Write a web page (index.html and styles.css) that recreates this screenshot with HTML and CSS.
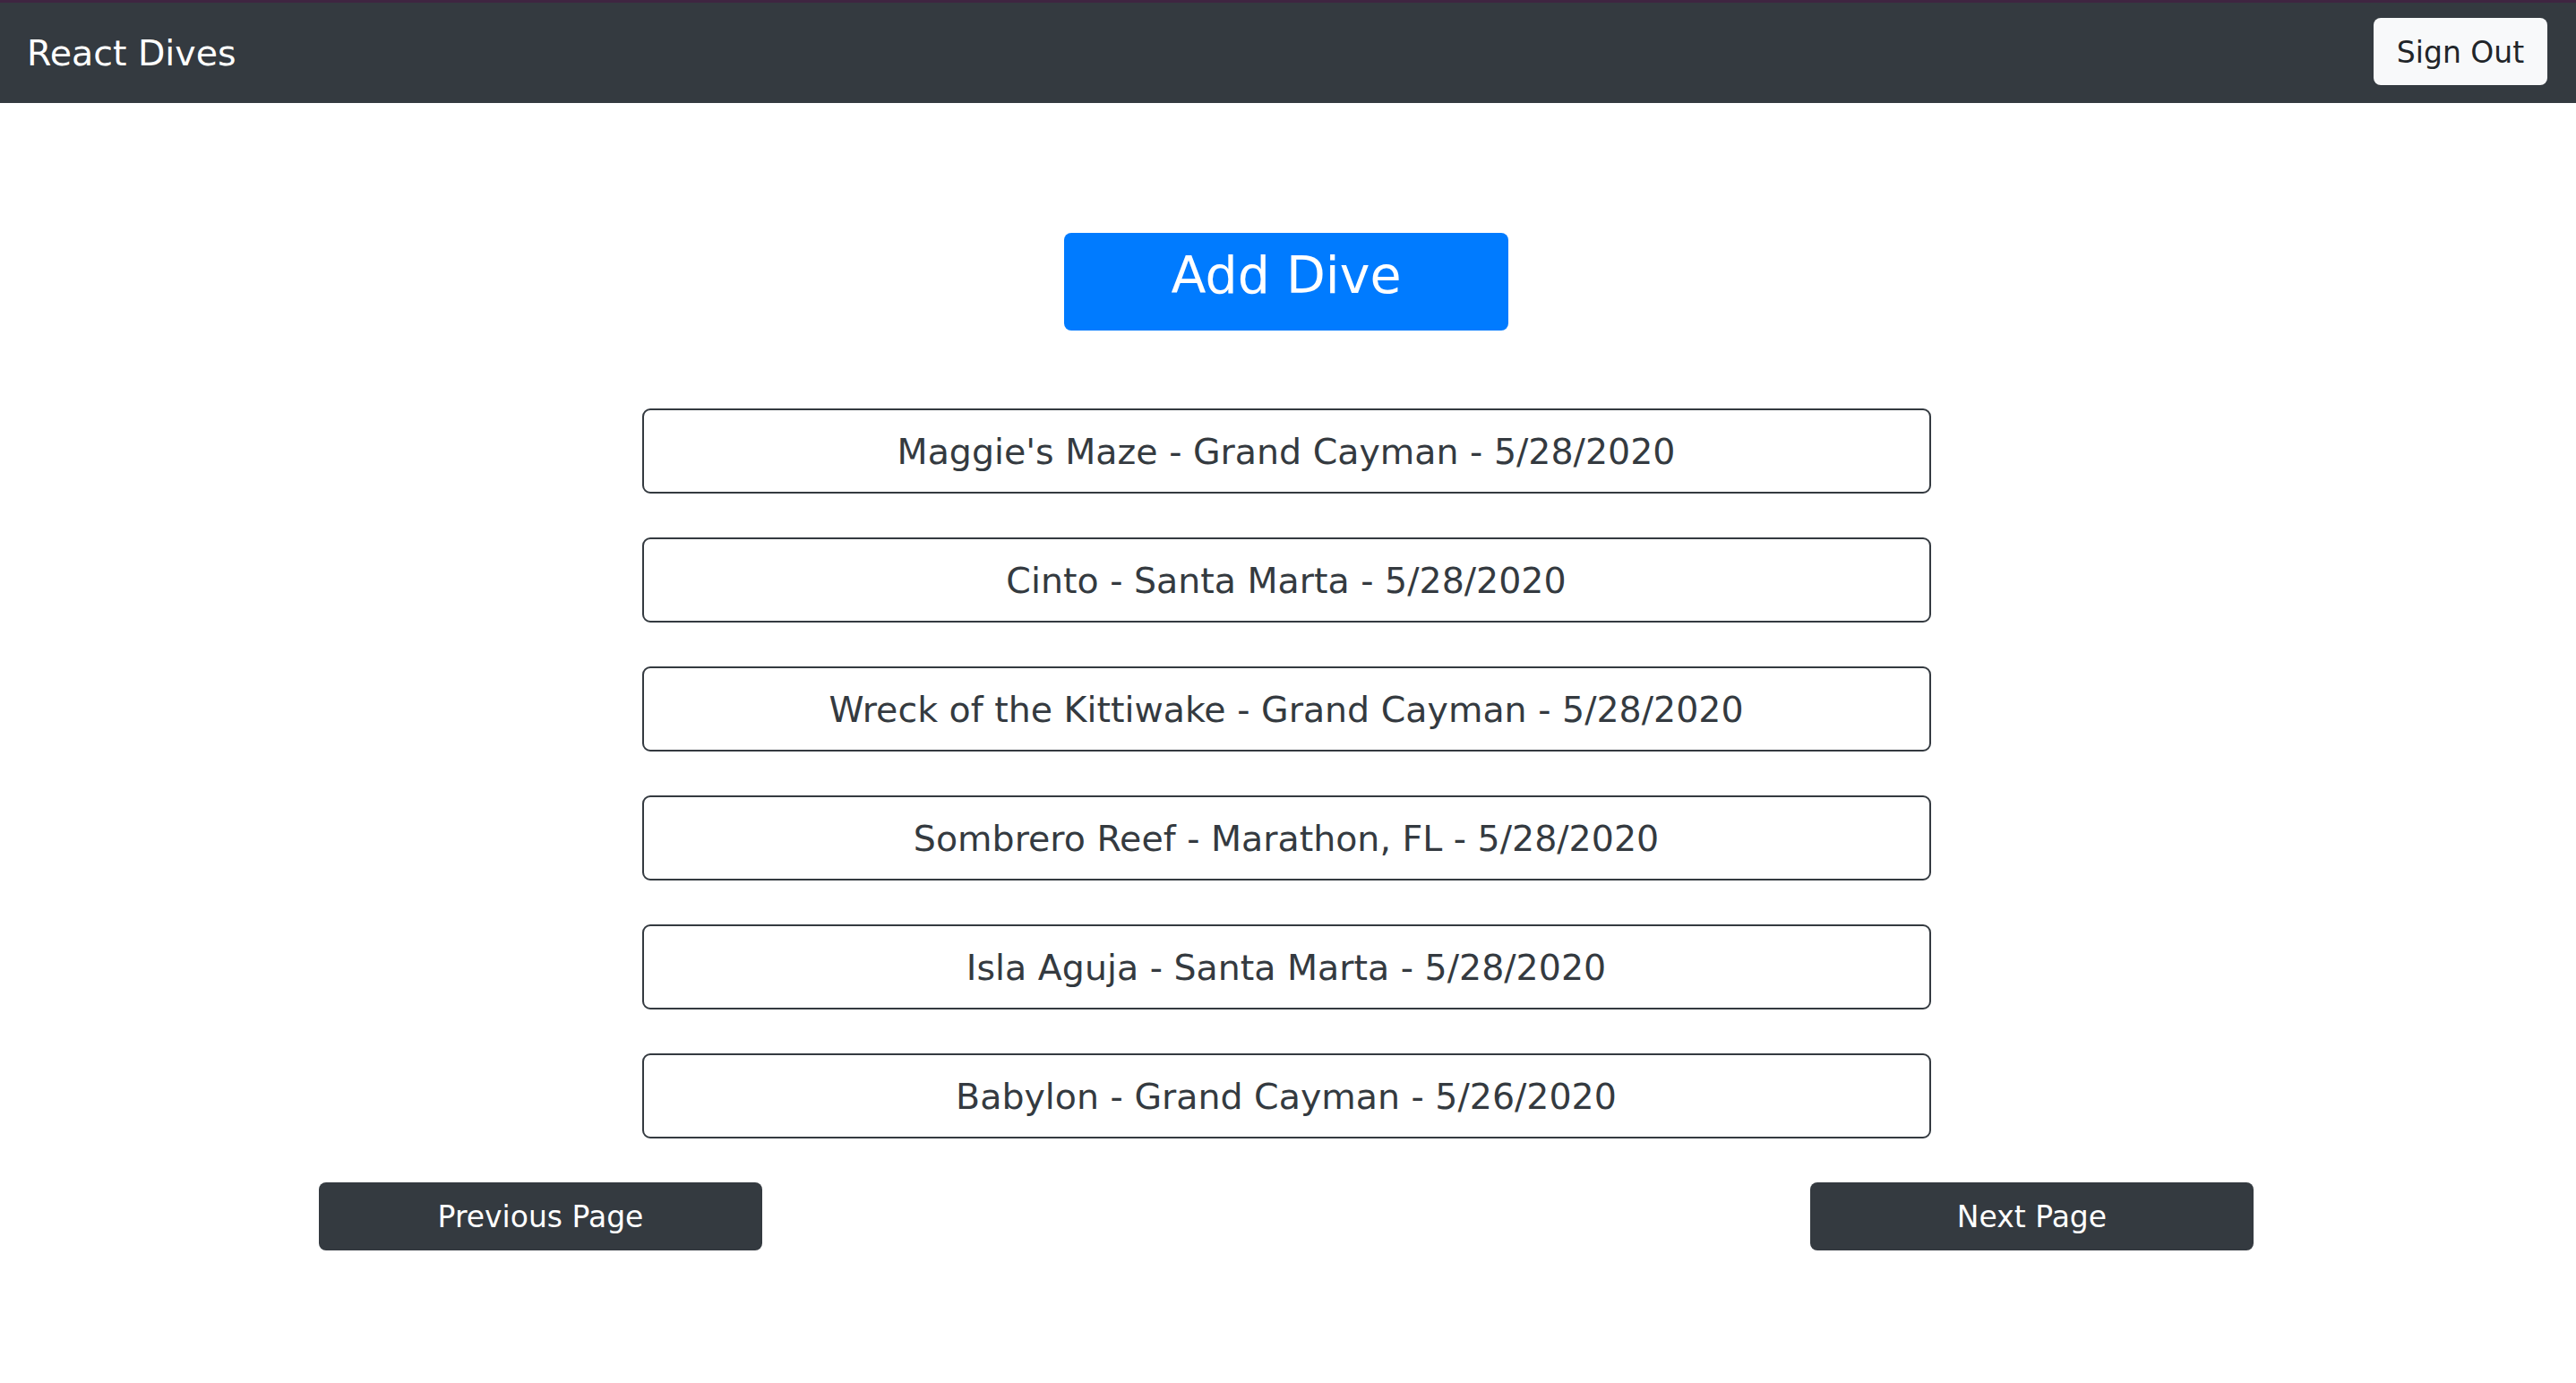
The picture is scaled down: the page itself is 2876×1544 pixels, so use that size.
FILE: index.html
```html
<!DOCTYPE html>
<html lang="en">
<head>
<meta charset="utf-8">
<title>React Dives</title>
<link rel="stylesheet" href="styles.css">
</head>
<body>
<nav class="navbar">
  <span class="brand">React Dives</span>
  <button class="btn-light">Sign Out</button>
</nav>
<main class="main">
  <button class="add-btn">Add Dive</button>
  <ul class="dive-list">
    <li class="dive-item">Maggie's Maze - Grand Cayman - 5/28/2020</li>
    <li class="dive-item">Cinto - Santa Marta - 5/28/2020</li>
    <li class="dive-item">Wreck of the Kittiwake - Grand Cayman - 5/28/2020</li>
    <li class="dive-item">Sombrero Reef - Marathon, FL - 5/28/2020</li>
    <li class="dive-item">Isla Aguja - Santa Marta - 5/28/2020</li>
    <li class="dive-item">Babylon - Grand Cayman - 5/26/2020</li>
  </ul>
  <div class="pager">
    <button class="btn-dark">Previous Page</button>
    <button class="btn-dark">Next Page</button>
  </div>
</main>
</body>
</html>
```
FILE: styles.css
```css
* { box-sizing: border-box; }
body {
  margin: 0;
  font-family: "DejaVu Sans", "Noto Sans", sans-serif;
  background: #ffffff;
  color: #343a40;
}
.navbar {
  height: 115px;
  border-top: 3px solid #3f2541;
  background: #343a40;
  display: flex;
  align-items: center;
  justify-content: space-between;
  padding: 0 32px 0 30px;
}
.brand {
  color: #ffffff;
  font-size: 39.5px;
  margin-top: 0;
}
button {
  font-family: inherit;
  border: none;
  cursor: pointer;
}
.btn-light {
  background: #f8f9fa;
  color: #212529;
  font-size: 33px;
  width: 194px;
  height: 75px;
  border-radius: 8px;
  margin-top: -3px;
  padding-top: 2px;
}
.main {
  display: flex;
  flex-direction: column;
  align-items: center;
  padding: 145px 4px 0 0;
}
.add-btn {
  width: 496px;
  height: 109px;
  background: #007bff;
  color: #ffffff;
  font-size: 57px;
  border-radius: 8px;
  padding: 0 0 16px 0;
}
.dive-list {
  list-style: none;
  margin: 87px 0 0 0;
  padding: 0;
  width: 1439px;
  display: flex;
  flex-direction: column;
  gap: 49px;
}
.dive-item {
  height: 95px;
  border: 2px solid #343a40;
  border-radius: 9px;
  display: flex;
  align-items: center;
  justify-content: center;
  font-size: 39.5px;
  color: #343a40;
}
.pager {
  width: 2160px;
  margin-top: 49px;
  display: flex;
  justify-content: space-between;
}
.btn-dark {
  background: #343a40;
  color: #ffffff;
  font-size: 33px;
  width: 495px;
  height: 76px;
  border-radius: 8px;
}
```
